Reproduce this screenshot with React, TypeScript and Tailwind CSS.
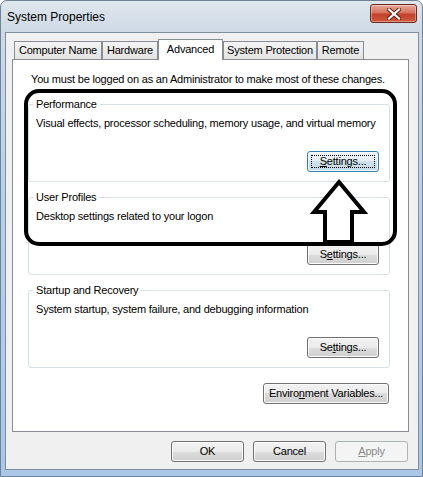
import type { ReactNode } from 'react'

const font = { fontFamily: '"Liberation Sans", Arial, sans-serif' }

function Btn({
  children,
  width,
  focused = false,
  disabled = false,
}: {
  children: ReactNode
  width: string
  focused?: boolean
  disabled?: boolean
}) {
  const base = 'relative flex h-[21px] items-center justify-center rounded-[3px] border text-[11px] tracking-[-0.2px]'
  const look = disabled
    ? 'border-[#adb2b5] bg-[#f4f4f4] text-[#8b8b8b]'
    : focused
      ? 'border-[#3581ad] bg-[linear-gradient(#eef5f9_0%,#e1edf4_50%,#d0e2ed_50%,#c3d9e7_100%)] text-black shadow-[inset_0_0_0_1px_#f6fbfe]'
      : 'border-[#707070] bg-[linear-gradient(#f2f2f2_0%,#ebebeb_50%,#dddddd_50%,#cfcfcf_100%)] text-black shadow-[inset_0_0_0_1px_#fbfbfb]'
  return (
    <div className={`${base} ${look} ${width}`}>
      {focused ? <span className="absolute inset-[3px] border border-dotted border-black" /> : null}
      <span className="relative">{children}</span>
    </div>
  )
}

function Tab({ label, width, selected = false }: { label: string; width: string; selected?: boolean }) {
  return (
    <div
      className={
        selected
          ? `relative z-10 -mb-px flex h-[21px] items-center justify-center border border-b-0 border-[#898c95] bg-white pb-[2px] text-[11px] tracking-[-0.2px] ${width}`
          : `flex h-[18px] items-center justify-center border border-b-0 border-[#898c95] bg-[linear-gradient(#f4f4f4,#e3e3e3)] text-[11px] tracking-[-0.2px] ${width}`
      }
    >
      {label}
    </div>
  )
}

function Group({
  title,
  text,
  button,
}: {
  title: string
  text: string
  button: ReactNode
}) {
  return (
    <div className="relative ml-[15px] flex h-[78px] w-[362px] flex-col rounded-[3px] border border-[#d5dfe5] pl-[7px] pr-[10px] pt-[12px] pb-[9px]">
      <span className="absolute -top-[7px] left-[4px] bg-white px-[3px] text-[11px] leading-[13px] tracking-[-0.2px]">
        {title}
      </span>
      <p className="text-[11px] leading-[13px] tracking-[-0.2px]">{text}</p>
      <div className="mt-auto flex justify-end">{button}</div>
    </div>
  )
}

function CloseButton() {
  return (
    <div className="flex h-[19px] w-[47px] items-center justify-center rounded-[3px] border border-[#6b2a1f] bg-[linear-gradient(#e9a99b_0%,#d7735f_45%,#c2402b_55%,#d35a3d_100%)] shadow-[inset_0_0_0_1px_rgba(255,255,255,0.35)]">
      <svg width="14" height="12" viewBox="0 0 14 12">
        <path d="M2 1.5 L12 10.5 M12 1.5 L2 10.5" stroke="#5a1d12" strokeWidth="4" strokeLinecap="square" />
        <path d="M2 1.5 L12 10.5 M12 1.5 L2 10.5" stroke="#ffffff" strokeWidth="2.2" strokeLinecap="square" />
      </svg>
    </div>
  )
}

export default function App() {
  return (
    <div className="relative h-[477px] w-[423px] overflow-hidden bg-white" style={font}>
      <div className="flex h-[477px] w-[423px] flex-col rounded-t-[7px] border border-[#6f8296] bg-[linear-gradient(180deg,#dfe6ec_0%,#cdd9e6_7%,#b9d0ea_40%,#aac7e7_100%)]">
        {/* title bar */}
        <div className="flex h-[31px] items-start justify-between pl-[6px] pr-[5px]">
          <span className="mt-[9px] text-[12px] leading-[14px] text-black">System Properties</span>
          <div className="mt-[3px]">
            <CloseButton />
          </div>
        </div>

        {/* client area */}
        <div className="ml-[4px] flex h-[438px] w-[414px] flex-col border border-[#7e8ea0] bg-[#f0f0f0]">
          <div className="ml-[8px] mt-[6px] flex items-end">
            <Tab label="Computer Name" width="w-[88px]" />
            <Tab label="Hardware" width="w-[56px]" />
            <Tab label="Advanced" width="w-[65px]" selected />
            <Tab label="System Protection" width="w-[94px]" />
            <Tab label="Remote" width="w-[47px]" />
          </div>

          <div className="ml-[6px] flex h-[373px] w-[397px] flex-col border border-[#898c95] bg-white pt-[13px]">
            <p className="pl-[18px] text-[11px] leading-[13px] tracking-[-0.2px]">
              You must be logged on as an Administrator to make most of these changes.
            </p>

            <div className="mt-[18px] flex flex-col gap-[15px]">
              <Group
                title="Performance"
                text="Visual effects, processor scheduling, memory usage, and virtual memory"
                button={
                  <Btn width="w-[72px]" focused>
                    <u>S</u>ettings...
                  </Btn>
                }
              />
              <Group
                title="User Profiles"
                text="Desktop settings related to your logon"
                button={
                  <Btn width="w-[72px]">
                    S<u>e</u>ttings...
                  </Btn>
                }
              />
              <Group
                title="Startup and Recovery"
                text="System startup, system failure, and debugging information"
                button={
                  <Btn width="w-[72px]">
                    Se<u>t</u>tings...
                  </Btn>
                }
              />
            </div>

            <div className="mt-[15px] flex justify-end pr-[19px]">
              <Btn width="w-[126px]">
                Enviro<u>n</u>ment Variables...
              </Btn>
            </div>
          </div>

          <div className="mt-[9px] flex justify-end gap-[9px] pr-[10px]">
            <Btn width="w-[73px]">OK</Btn>
            <Btn width="w-[73px]">Cancel</Btn>
            <Btn width="w-[73px]" disabled>
              <u>A</u>pply
            </Btn>
          </div>
        </div>
      </div>

      {/* annotation: black outline and arrow */}
      <svg className="pointer-events-none absolute left-0 top-0" width="423" height="477" viewBox="0 0 423 477">
        <rect x="26" y="91" width="369" height="153" rx="13" fill="none" stroke="#000" strokeWidth="4" />
        <polygon
          points="339,182 364,212 352,212 352,242 325,242 325,212 314,212"
          fill="#fff"
          stroke="#000"
          strokeWidth="4"
          strokeLinejoin="miter"
        />
      </svg>
    </div>
  )
}
